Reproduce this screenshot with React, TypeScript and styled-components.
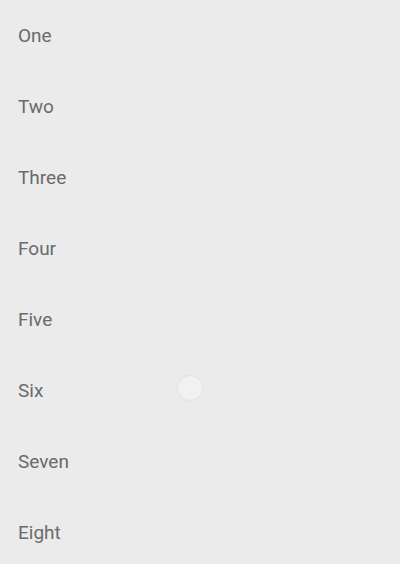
import styled, { createGlobalStyle } from "styled-components"

const GlobalStyle = createGlobalStyle`
  html, body {
    margin: 0;
    padding: 0;
    background: #ebebeb;
  }
  body {
    font-family: Roboto, "Noto Sans", sans-serif;
  }
`

const items = ["One", "Two", "Three", "Four", "Five", "Six", "Seven", "Eight"]

export default function App() {
  return (
    <>
      <GlobalStyle />
      <StyledScreen>
        <StyledList>
          {items.map((label) => (
            <StyledRow key={label}>{label}</StyledRow>
          ))}
        </StyledList>
        <StyledTouch />
      </StyledScreen>
    </>
  )
}

const StyledScreen = styled.main`
  position: relative;
  width: 400px;
  height: 564px;
  overflow: hidden;
  background: #ebebeb;
`

const StyledList = styled.ul`
  list-style: none;
  margin: 0;
  padding: 0;
  display: flex;
  flex-direction: column;
`

const StyledRow = styled.li`
  height: 71px;
  display: flex;
  align-items: center;
  padding-left: 18px;
  color: #6a6a6a;
  font-size: 19px;
`

const StyledTouch = styled.span`
  position: absolute;
  left: 178px;
  top: 376px;
  width: 24px;
  height: 24px;
  border-radius: 50%;
  background: #f1f1f1;
  box-shadow: 0 0 0 1px #e4e4e4;
`
